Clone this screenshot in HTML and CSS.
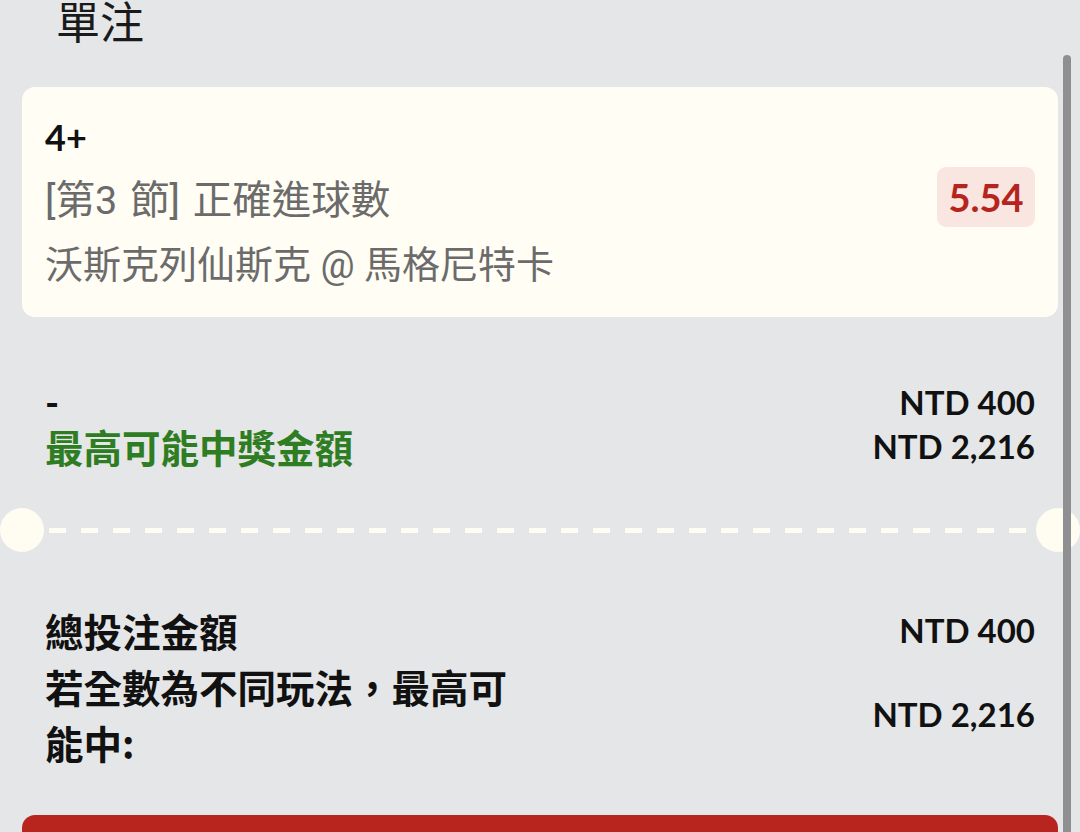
FILE: index.html
```html
<!DOCTYPE html>
<html lang="zh-Hant">
<head>
<meta charset="utf-8">
<link rel="stylesheet" href="styles.css">
</head>
<body>
<div class="screen">
  <div class="title">單注</div>
  <div class="card">
    <div class="sel">
      <div class="pick">4+</div>
      <div class="market">[第3 節] 正確進球數</div>
      <div class="match">沃斯克列仙斯克 @ 馬格尼特卡</div>
    </div>
    <div class="odds">5.54</div>
  </div>
  <div class="rows first">
    <div class="row"><span class="dash">-</span><span class="amt">NTD 400</span></div>
    <div class="row"><span class="win">最高可能中獎金額</span><span class="amt">NTD 2,216</span></div>
  </div>
  <div class="divider">
    <span class="notch"></span>
    <span class="dashes"></span>
    <span class="notch"></span>
  </div>
  <div class="rows second">
    <div class="row2"><span class="lbl">總投注金額</span><span class="amt">NTD 400</span></div>
    <div class="row2"><span class="lbl">若全數為不同玩法，最高可能中:</span><span class="amt">NTD 2,216</span></div>
  </div>
  <div class="button"></div>
  <div class="scrollbar"></div>
</div>
</body>
</html>
```
FILE: styles.css
```css
html, body {
  margin: 0;
  padding: 0;
  background: #e5e6e8;
}
body {
  width: 1080px;
  height: 832px;
  overflow: hidden;
  font-family: Lato, "Noto Sans CJK TC", sans-serif;
  color: #111;
}
.screen {
  position: relative;
  width: 1080px;
  height: 832px;
  overflow: hidden;
}
.title {
  font-family: "Noto Sans CJK TC", sans-serif;
  font-size: 44px;
  line-height: 44px;
  margin: -2px 0 0 56px;
  height: 44px;
  color: #1a1a1a;
}
.card {
  margin: 45px 22px 0 22px;
  height: 230px;
  box-sizing: border-box;
  padding: 18px 23px 20px 23px;
  background: #fffdf4;
  border-radius: 13px;
  display: flex;
  align-items: center;
  justify-content: space-between;
}
.sel {
  display: flex;
  flex-direction: column;
}
.pick {
  font-family: Lato, "Noto Sans CJK TC", sans-serif;
  font-weight: 700;
  font-size: 36px;
  line-height: 64px;
  color: #111;
}
.market, .match {
  font-family: Roboto, "Noto Sans CJK TC", sans-serif;
  font-size: 38px;
  line-height: 64px;
  color: #6b6b6b;
}
.market {
  font-size: 39.5px;
  word-spacing: 3px;
}
.odds {
  width: 98px;
  height: 60px;
  margin-top: -8px;
  border-radius: 9px;
  background: #f9e6e0;
  color: #b5241f;
  font-family: Lato, sans-serif;
  font-weight: 700;
  font-size: 38px;
  display: flex;
  align-items: center;
  justify-content: center;
}
.rows {
  padding: 0 45px;
}
.first {
  margin-top: 63px;
}
.row {
  display: flex;
  justify-content: space-between;
  align-items: center;
  height: 44px;
  line-height: 44px;
}
.dash {
  font-family: Lato, sans-serif;
  font-weight: 700;
  font-size: 38px;
}
.amt {
  font-family: Lato, sans-serif;
  font-weight: 700;
  font-size: 33px;
  white-space: nowrap;
  color: #111;
}
.win {
  font-family: "Noto Sans CJK TC", sans-serif;
  font-weight: 700;
  font-size: 38.5px;
  color: #2f7d22;
}
.divider {
  margin-top: 40px;
  height: 44px;
  display: flex;
  align-items: center;
}
.notch {
  width: 44px;
  height: 44px;
  border-radius: 50%;
  background: #fffdf1;
  flex: none;
}
.dashes {
  flex: 1;
  height: 5px;
  margin: 0 4px 0 5px;
  background: repeating-linear-gradient(to right, #fffdf1 0, #fffdf1 17px, transparent 17px, transparent 32px);
}
.second {
  margin-top: 50px;
}
.row2 {
  display: flex;
  justify-content: space-between;
  align-items: center;
}
.lbl {
  font-family: "Noto Sans CJK TC", sans-serif;
  font-weight: 700;
  font-size: 38.5px;
  line-height: 56px;
  width: 480px;
  color: #111;
}
.button {
  margin: 45px 22px 0 22px;
  height: 80px;
  border-radius: 13px;
  background: #b8251e;
}
.scrollbar {
  position: absolute;
  left: 1063px;
  top: 55px;
  width: 8px;
  height: 800px;
  border-radius: 4px;
  background: #8f8f91;
}
```
